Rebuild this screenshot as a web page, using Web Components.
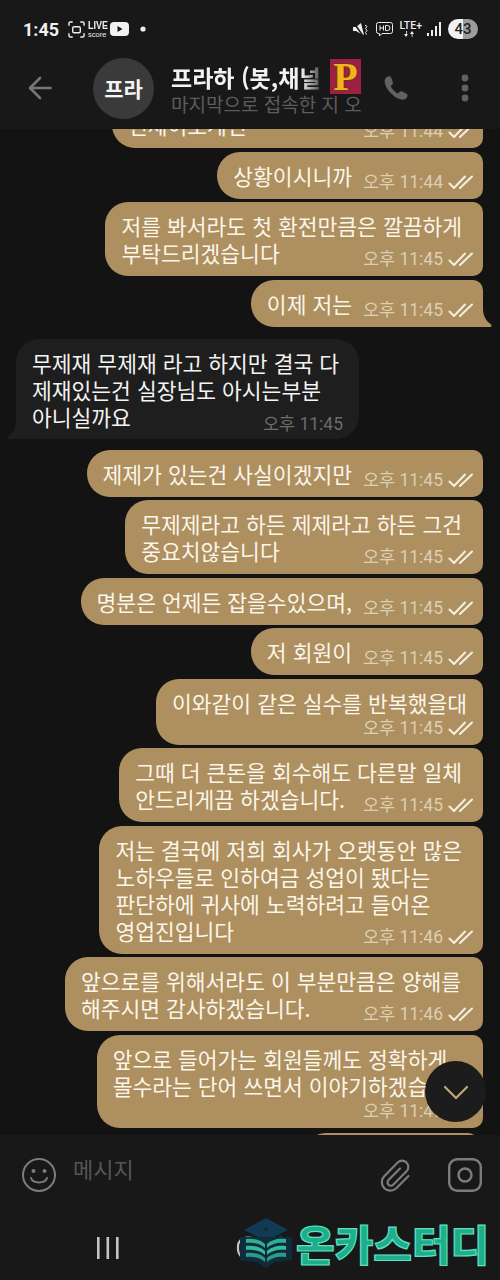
<!DOCTYPE html>
<html lang="ko">
<head>
<meta charset="utf-8">
<title>chat</title>
<style>
  html, body { margin: 0; padding: 0; background: #131313; }
  body { width: 500px; height: 1280px; overflow: hidden; font-family: "Noto Sans CJK KR", Roboto, sans-serif; }
</style>
</head>
<body>
<chat-app>
  <status-bar slot="top"></status-bar>
  <chat-header slot="top"></chat-header>

  <chat-bubble time="오후 11:44" style="margin-top:-28px;width:371px">언제이로계신</chat-bubble>
  <chat-bubble time="오후 11:44">상황이시니까</chat-bubble>
  <chat-bubble time="오후 11:45" pad="21">저를 봐서라도 첫 환전만큼은 깔끔하게<br>부탁드리겠습니다</chat-bubble>
  <chat-bubble time="오후 11:45" tail>이제 저는</chat-bubble>
  <chat-bubble kind="in" time="오후 11:45" tail>무제재 무제재 라고 하지만 결국 다<br>제재있는건 실장님도 아시는부분<br>아니실까요</chat-bubble>
  <chat-bubble time="오후 11:45">제제가 있는건 사실이겠지만</chat-bubble>
  <chat-bubble time="오후 11:45" pad="21">무제제라고 하든 제제라고 하든 그건<br>중요치않습니다</chat-bubble>
  <chat-bubble time="오후 11:45">명분은 언제든 잡을수있으며,</chat-bubble>
  <chat-bubble time="오후 11:45">저 회원이</chat-bubble>
  <chat-bubble time="오후 11:45" stack>이와같이 같은 실수를 반복했을대</chat-bubble>
  <chat-bubble time="오후 11:45" pad="21">그때 더 큰돈을 회수해도 다른말 일체<br>안드리게끔 하겠습니다.</chat-bubble>
  <chat-bubble time="오후 11:46" pad="21">저는 결국에 저희 회사가 오랫동안 많은<br>노하우들로 인하여금 성업이 됐다는<br>판단하에 귀사에 노력하려고 들어온<br>영업진입니다</chat-bubble>
  <chat-bubble time="오후 11:46" pad="22">앞으로를 위해서라도 이 부분만큼은 양해를<br>해주시면 감사하겠습니다.</chat-bubble>
  <chat-bubble time="오후 11:47" stack pad="16">앞으로 들어가는 회원들께도 정확하게<br>몰수라는 단어 쓰면서 이야기하겠습니다</chat-bubble>
  <chat-bubble style="margin:2px 5px 0 0;width:175px" time="">&nbsp;</chat-bubble>

  <scroll-fab slot="over"></scroll-fab>
  <input-bar slot="bottom"></input-bar>
  <nav-bar slot="bottom"></nav-bar>
  <brand-mark slot="over"></brand-mark>
</chat-app>

<script>
class ChatApp extends HTMLElement
{
  constructor()
  {
    super();
    this.attachShadow( { mode: 'open' } );
    this.shadowRoot.innerHTML = `<style>
      :host { display: flex; flex-direction: column; position: relative; width: 500px; height: 1280px; overflow: hidden; background: #131313; }
      .list { flex: 1; min-height: 0; overflow: hidden; display: flex; flex-direction: column; align-items: flex-end; gap: 3.5px; padding-right: 17px; }
    </style>
    <slot name="top"></slot>
    <div class="list"><slot></slot></div>
    <slot name="bottom"></slot>
    <slot name="over"></slot>`;
  }
}
customElements.define( 'chat-app', ChatApp );

class StatusBar extends HTMLElement
{
  constructor()
  {
    super();
    this.attachShadow( { mode: 'open' } );
    this.shadowRoot.innerHTML = `<style>
      :host { display: flex; align-items: center; height: 54px; box-sizing: border-box; padding: 4px 22px 0 23px; background: #181818; color: #f0f0f0; font-family: Roboto, sans-serif; }
      .time { font-size: 18px; font-weight: 700; width: 35px; }
      .live { display: flex; flex-direction: column; margin-left: 3px; width: 22px; line-height: 1; font-family: "Liberation Sans", sans-serif; color: #eee; }
      .live b { font-size: 11.500px; line-height: 11px; transform: scaleX(.78); transform-origin: left; }
      .live i { font-style: normal; font-size: 7.500px; line-height: 7px; }
      .gap { flex: 1; }
      svg { display: block; flex: none; }
      .batt { width: 30px; height: 20px; border-radius: 10px; background: linear-gradient(90deg, #f2f2f2 0 50%, #9c9c9c 50%); color: #222; font-size: 15px; font-weight: 500; text-align: center; line-height: 20px; margin-left: 7px; }
      .lte { font-size: 10.500px; font-weight: 500; line-height: 1; margin: 0 5px 0 6px; display: flex; flex-direction: column; align-items: center; color: #eee; }
    </style>
    <span class="time">1:45</span>
    <svg style="margin-left:10px" width="17" height="17" viewBox="0 0 18 18" fill="none" stroke="#eee" stroke-width="1.500"><path d="M1 5V2.500A1.500 1.500 0 0 1 2.500 1H5M13 1h2.500A1.500 1.500 0 0 1 17 2.500V5M17 13v2.500a1.500 1.500 0 0 1-1.500 1.500H13M5 17H2.500A1.500 1.500 0 0 1 1 15.500V13"/><rect x="5" y="6" width="8" height="6.500" rx="1.500"/></svg>
    <span class="live"><b>LIVE</b><i>score</i></span>
    <svg width="19" height="14" viewBox="0 0 19 14"><rect width="19" height="14" rx="4" fill="#f2f2f2"/><path d="M7.500 4l5 3-5 3z" fill="#181818"/></svg>
    <svg style="margin-left:11px" width="6" height="6"><circle cx="3" cy="3" r="2.600" fill="#eee"/></svg>
    <span class="gap"></span>
    <svg width="15" height="15" viewBox="0 0 15 15" fill="#eee"><path d="M0 5h3l5-4 3 12-3-1-5-3H0z"/><path d="M1 1l9 13" stroke="#181818" stroke-width="1.500"/><path d="M12 3l2 1.500-1.500 2 1.500 2-1.500 2 1 2" fill="none" stroke="#eee" stroke-width="1"/></svg>
    <svg style="margin-left:8px" width="17" height="17" viewBox="0 0 17 17" fill="none" stroke="#eee" stroke-width="1"><path d="M2.500 1.500h12a2 2 0 0 1 2 2v7a2 2 0 0 1-2 2H6L3.500 15v-2.500h-1a2 2 0 0 1-2-2v-7a2 2 0 0 1 2-2z"/><path d="M4 4.500v5M7.500 4.500v5M4 7h3.500M9.500 4.500v5h2a2.500 2.500 0 0 0 0-5z"/></svg>
    <span class="lte">LTE+<svg width="14" height="6" viewBox="0 0 14 6" fill="#eee"><path d="M2 6L0 3h4zM2 0h.8v3H2zM8 0l2 3H6zM7.700 3h.8v3h-.8z"/></svg></span>
    <svg width="14" height="14" viewBox="0 0 14 14" fill="#eee"><rect x="0" y="11" width="2" height="3"/><rect x="4" y="8" width="2" height="6"/><rect x="8" y="4" width="2" height="10"/><rect x="12" y="0" width="2" height="14"/></svg>
    <span class="batt">43</span>`;
  }
}
customElements.define( 'status-bar', StatusBar );

class ChatHeader extends HTMLElement
{
  constructor()
  {
    super();
    this.attachShadow( { mode: 'open' } );
    this.shadowRoot.innerHTML = `<style>
      :host { display: flex; align-items: center; height: 75px; background: #181818; box-sizing: border-box; padding: 0 0 7px 28px; font-family: "Noto Sans CJK KR", sans-serif; }
      svg { display: block; flex: none; }
      .avatar { width: 61px; height: 61px; border-radius: 50%; background: #3a3a3a; color: #f5f5f5; font-size: 21px; font-weight: 700; display: flex; align-items: center; justify-content: center; margin-left: 41px; flex: none; }
      .who { width: 190px; margin-left: 17px; flex: none; }
      .name { display: flex; align-items: center; height: 35px; margin-top: -4px; }
      .title { width: 159px; white-space: nowrap; overflow: hidden; color: #f2f2f2; font-size: 23px; line-height: 34px; font-weight: 700; -webkit-mask-image: linear-gradient(90deg, #000 82%, transparent 98%); mask-image: linear-gradient(90deg, #000 82%, transparent 98%); }
      .logo { width: 31px; height: 35px; background: #9c1f44; color: #f3b31f; font: 700 40px/35px "Liberation Serif", serif; text-align: center; flex: none; -webkit-text-stroke: 1.500px #6b3a10; paint-order: stroke fill; }
      .sub { color: #5d5d5d; font-size: 19px; line-height: 19px; white-space: nowrap; }
    </style>
    <svg width="24" height="24" viewBox="0 0 24 24" fill="none" stroke="#777" stroke-width="2.600" stroke-linecap="round" stroke-linejoin="round"><path d="M22.500 12H2.500M12 2L2 12l10 10"/></svg>
    <span class="avatar">프라</span>
    <div class="who">
      <div class="name"><span class="title">프라하 (봇,채널</span><span class="logo">P</span></div>
      <div class="sub">마지막으로 접속한 지 오</div>
    </div>
    <svg style="margin-left:20px" width="29" height="29" viewBox="0 0 24 24" fill="#616161"><path d="M6.600 1.800c-1.700.3-3.600 1.800-3.600 4 0 3 2 7 5 10s6.500 5.500 10 5.500c2 0 3.800-1.700 4-3.400.1-1-.6-1.500-1.500-2l-3-1.400c-1-.4-1.800-.2-2.400.6l-.9 1.100c-2.300-.8-5.200-3.800-6.100-6.300l1.100-1c.8-.7.900-1.500.5-2.400L8.500 3.200c-.4-.9-1-1.500-1.900-1.400z"/></svg>
    <svg style="margin-left:50px" width="10" height="28" viewBox="0 0 10 28" fill="#616161"><circle cx="5" cy="4" r="3.400"/><circle cx="5" cy="14" r="3.400"/><circle cx="5" cy="24" r="3.400"/></svg>`;
  }
}
customElements.define( 'chat-header', ChatHeader );

class ChatBubble extends HTMLElement
{
  constructor()
  {
    super();
    this.attachShadow( { mode: 'open' } );
  }

  connectedCallback ()
  {
    const time = this.getAttribute( 'time' ) || '';
    const isIn = this.getAttribute( 'kind' ) === 'in';
    const pad = this.getAttribute( 'pad' ) || 16;
    const ticks = ( isIn || !time ) ? '' : `<svg width="25" height="14" viewBox="0 0 25 14" fill="none" stroke="#f5efe0" stroke-width="2" stroke-linecap="round" stroke-linejoin="round"><path d="M1.500 8.500l4.500 4.500L17 1.500M12 13L24 1.500"/></svg>`;
    const tail = !this.hasAttribute( 'tail' ) ? '' : isIn
      ? `<svg class="tail" style="left:-9px" width="24" height="18" viewBox="0 0 24 18"><path d="M24 0v18H2C0 18 0 16 1.500 15 6 12 9 6 9 0z" fill="#1e1e1e"/></svg>`
      : `<svg class="tail" style="right:-9px" width="24" height="18" viewBox="0 0 24 18"><path d="M0 0v18h22c2 0 2-2 .5-3-3-2-7.500-7-7.500-15z" fill="#ae8f5f"/></svg>`;
    this.shadowRoot.innerHTML = `<style>
      :host { display: block; flex: none; position: relative; width: fit-content; font-family: "Noto Sans CJK KR", sans-serif; color: #fbf6ea; }
      .box { display: grid; background: #ae8f5f; border-radius: 23px 10px 10px 23px; padding: 10px ${pad}px 10px 16px; font-size: 21.500px; line-height: 27px; white-space: nowrap; }
      :host([kind="in"]) { align-self: flex-start; margin: 8.500px 0 7.500px 16px; color: #f4f4f4; }
      :host([kind="in"]) .box { background: #1e1e1e; border-radius: 23px; padding-right: 20px; padding-bottom: 9px; }
      :host([tail]) .box { border-bottom-right-radius: 0; }
      :host([kind="in"][tail]) .box { border-bottom-left-radius: 0; border-bottom-right-radius: 23px; }
      .text, .meta { grid-area: 1 / 1; }
      .meta { align-self: end; justify-self: end; display: flex; align-items: center; gap: 5px; margin-right: ${10 - pad}px; color: #dccfb5; font: 400 17.500px/24px Roboto, "Noto Sans CJK KR", sans-serif; transform: translateY(5px); }
      :host([kind="in"]) .meta { color: #6c6c6c; margin-right: -4px; transform: translateY(6px); }
      .space { display: inline-block; width: ${isIn ? 0 : 131 - pad}px; }
      :host([stack]) .space { display: block; width: auto; height: 19px; }
      .tail { position: absolute; bottom: 0; display: block; }
    </style>
    <div class="box"><div class="text"><slot></slot><span class="space"></span></div><div class="meta">${time}${ticks}</div></div>${tail}`;
  }
}
customElements.define( 'chat-bubble', ChatBubble );

class ScrollFab extends HTMLElement
{
  constructor()
  {
    super();
    this.attachShadow( { mode: 'open' } );
    this.shadowRoot.innerHTML = `<style>
      :host { position: absolute; left: 425px; top: 1061px; width: 61px; height: 61px; border-radius: 50%; background: #1c1c1c; display: flex; align-items: center; justify-content: center; }
    </style>
    <svg width="26" height="16" viewBox="0 0 26 16" fill="none" stroke="#c2a675" stroke-width="2.200" stroke-linecap="round" stroke-linejoin="round"><path d="M2 3l11 11L24 3"/></svg>`;
  }
}
customElements.define( 'scroll-fab', ScrollFab );

class InputBar extends HTMLElement
{
  constructor()
  {
    super();
    this.attachShadow( { mode: 'open' } );
    this.shadowRoot.innerHTML = `<style>
      :host { display: flex; align-items: center; height: 80px; background: #181818; box-sizing: border-box; padding: 0 18px 0 22px; font-family: "Noto Sans CJK KR", sans-serif; }
      .msg { flex: 1; margin: -14px 0 0 17px; color: #555; font-size: 22px; }
      svg { display: block; flex: none; }
    </style>
    <svg width="34" height="34" viewBox="0 0 34 34" fill="none" stroke="#7c7c7c" stroke-width="2"><circle cx="17" cy="17" r="16"/><circle cx="11.500" cy="13" r="2" fill="#7c7c7c" stroke="none"/><circle cx="22.500" cy="13" r="2" fill="#7c7c7c" stroke="none"/><path d="M9 20c2 6 14 6 16 0" stroke-linecap="round"/></svg>
    <span class="msg">메시지</span>
    <svg style="margin-right:37px" width="31" height="33" viewBox="0 0 31 33" fill="none" stroke="#7c7c7c" stroke-width="2.200" stroke-linecap="round" stroke-linejoin="round"><path d="M20 9.500L8.500 21a3.300 3.300 0 0 0 4.700 4.700L26.500 12.300a6.200 6.200 0 0 0-8.800-8.800L4 17.500a8.500 8.500 0 0 0 12 12L28.500 17"/></svg>
    <svg width="34" height="34" viewBox="0 0 34 34" fill="none" stroke="#7c7c7c" stroke-width="2.400"><rect x="1.200" y="1.200" width="31.600" height="31.600" rx="8"/><circle cx="17" cy="17" r="6.500"/></svg>`;
  }
}
customElements.define( 'input-bar', InputBar );

class NavBar extends HTMLElement
{
  constructor()
  {
    super();
    this.attachShadow( { mode: 'open' } );
    this.shadowRoot.innerHTML = `<style>
      :host { display: flex; align-items: center; height: 65px; background: #181818; padding-left: 97px; }
      svg { display: block; flex: none; }
    </style>
    <svg width="22" height="24" viewBox="0 0 22 24" fill="#c4c4c4"><rect x="0" y="1" width="2.600" height="22"/><rect x="9.500" y="1" width="2.600" height="22"/><rect x="19" y="1" width="2.600" height="22"/></svg>
    <svg style="margin-left:117px" width="24" height="24" viewBox="0 0 24 24" fill="none" stroke="#c4c4c4" stroke-width="2.200"><rect x="2" y="1.500" width="20" height="21" rx="9"/></svg>`;
  }
}
customElements.define( 'nav-bar', NavBar );

class BrandMark extends HTMLElement
{
  constructor()
  {
    super();
    this.attachShadow( { mode: 'open' } );
    this.shadowRoot.innerHTML = `<style>
      :host { position: absolute; left: 240px; top: 1217px; display: flex; align-items: center; gap: 4px; }
      .word { color: #1fae8c; font: 900 42px/52px "Noto Sans CJK KR", sans-serif; white-space: nowrap; -webkit-text-stroke: 1.200px #5de3c2; }
      svg { display: block; flex: none; }
    </style>
    <svg width="52" height="52" viewBox="0 0 52 52"><path d="M26 1L4 13l22 11 22-11z" fill="#113a55"/><circle cx="26" cy="12" r="1.600" fill="#0a2232"/><path d="M10 18v8h32v-8L26 26z" fill="#113a55"/><path d="M0 20h52v23l-17 2-9 6-9-6-17-2z" fill="#0f2c3e"/><path d="M6 22c8-1 15 1 19 5v4c-4-4-11-6-19-5zM46 22c-8-1-15 1-19 5v4c4-4 11-6 19-5z" fill="#2fae91"/><path d="M6 29c8-1 15 1 19 5v4c-4-4-11-6-19-5zM46 29c-8-1-15 1-19 5v4c4-4 11-6 19-5z" fill="#35b99b"/><path d="M6 36c8-1 15 1 19 5v4c-4-4-11-6-19-5zM46 36c-8-1-15 1-19 5v4c4-4 11-6 19-5z" fill="#2a9d84"/></svg>
    <span class="word">온카스터디</span>`;
  }
}
customElements.define( 'brand-mark', BrandMark );
</script>
</body>
</html>
